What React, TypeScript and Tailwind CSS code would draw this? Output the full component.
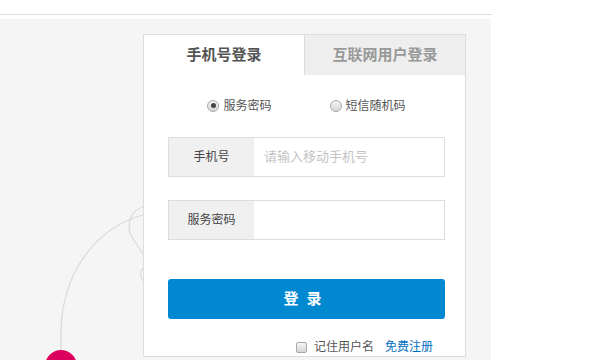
import { useState } from "react";

const font = { fontFamily: '"Liberation Sans", "Noto Sans CJK SC", sans-serif' };

function Radio({ checked, label, onClick }: { checked: boolean; label: string; onClick: () => void }) {
  return (
    <button type="button" onClick={onClick} className="flex items-center gap-[4px] text-[12px] text-[#555]">
      <span className="flex h-[12px] w-[12px] items-center justify-center rounded-full border border-[#a9a9a9] bg-gradient-to-b from-[#f4f4f4] to-[#d8d8d8]">
        {checked && <span className="h-[5px] w-[5px] rounded-full bg-[#444]"></span>}
      </span>
      <span>{label}</span>
    </button>
  );
}

export default function App() {
  const [tab, setTab] = useState(0);
  const [mode, setMode] = useState(0);
  const [remember, setRemember] = useState(false);

  return (
    <div className="h-[360px] w-[600px] overflow-hidden bg-white" style={font}>
      {/* top strip */}
      <div className="h-[15px] w-[492px] border-b border-[#dddddd]"></div>

      {/* gray stage */}
      <div className="relative mt-[4px] h-[341px] w-[491px] bg-[#f5f5f5] pl-[143px] pt-[15px]">
        <svg className="absolute left-0 top-0" width="491" height="341" viewBox="0 19 491 341" fill="none">
          <path d="M61 352 L61 332 C62 272 96 228 143 215" stroke="#dadada" strokeWidth="1.2" />
          <path d="M143 207 C129 211 126 227 132 237 C136 244 140 249 143 254" stroke="#dadada" strokeWidth="1.2" />
          <path d="M143 268 C140 271 140 277 143 281" stroke="#dadada" strokeWidth="1.2" />
          <circle cx="61" cy="366" r="16" fill="#dc005e" />
        </svg>

        {/* login card */}
        <div className="relative w-[323px] border border-[#dddddd] bg-white">
          <div className="flex h-[40px]">
            <button
              type="button"
              onClick={() => setTab(0)}
              className={`w-[160px] text-[15px] font-bold ${tab === 0 ? "bg-white text-[#555]" : "bg-[#eeeeee] text-[#999]"}`}
            >
              手机号登录
            </button>
            <button
              type="button"
              onClick={() => setTab(1)}
              className={`flex-1 border-l border-[#dddddd] text-[15px] font-bold ${tab === 1 ? "bg-white text-[#555]" : "bg-[#eeeeee] text-[#999]"}`}
            >
              互联网用户登录
            </button>
          </div>

          <div className="pl-[24px] pr-[20px]">
            <div className="mt-[15px] flex h-[30px] items-center justify-center gap-[58px] pt-[1px]">
              <Radio checked={mode === 0} label="服务密码" onClick={() => setMode(0)} />
              <Radio checked={mode === 1} label="短信随机码" onClick={() => setMode(1)} />
            </div>

            <div className="mt-[17px] flex h-[40px] border border-[#dddddd]">
              <div className="flex w-[85px] items-center justify-center bg-[#f0f0f0] text-[12px] text-[#444]">手机号</div>
              <input
                className="min-w-0 flex-1 pl-[10px] text-[13px] text-[#333] outline-none placeholder:text-[#c4c4c4]"
                placeholder="请输入移动手机号"
              />
            </div>

            <div className="mt-[23px] flex h-[40px] border border-[#dddddd]">
              <div className="flex w-[85px] items-center justify-center bg-[#f0f0f0] text-[12px] text-[#444]">服务密码</div>
              <input type="password" className="min-w-0 flex-1 pl-[10px] text-[13px] outline-none" />
            </div>

            <button
              type="button"
              className="mt-[39px] flex h-[40px] w-full items-center justify-center rounded-[3px] bg-[#0088d1] text-[15px] font-bold tracking-[8px] text-white"
            >
              登录
            </button>

            <div className="mt-[19px] flex items-center justify-end gap-[11px] pr-[12px] text-[12px]">
              <button type="button" onClick={() => setRemember(!remember)} className="flex items-center gap-[7px] text-[#555]">
                <span className="flex h-[11px] w-[11px] items-center justify-center rounded-[2px] border border-[#a9a9a9] bg-gradient-to-b from-[#f6f6f6] to-[#d6d6d6] text-[9px] leading-none text-[#333]">
                  {remember ? "✓" : ""}
                </span>
                记住用户名
              </button>
              <a href="#" className="text-[#0070c0]">免费注册</a>
            </div>
          </div>
        </div>
      </div>
    </div>
  );
}
